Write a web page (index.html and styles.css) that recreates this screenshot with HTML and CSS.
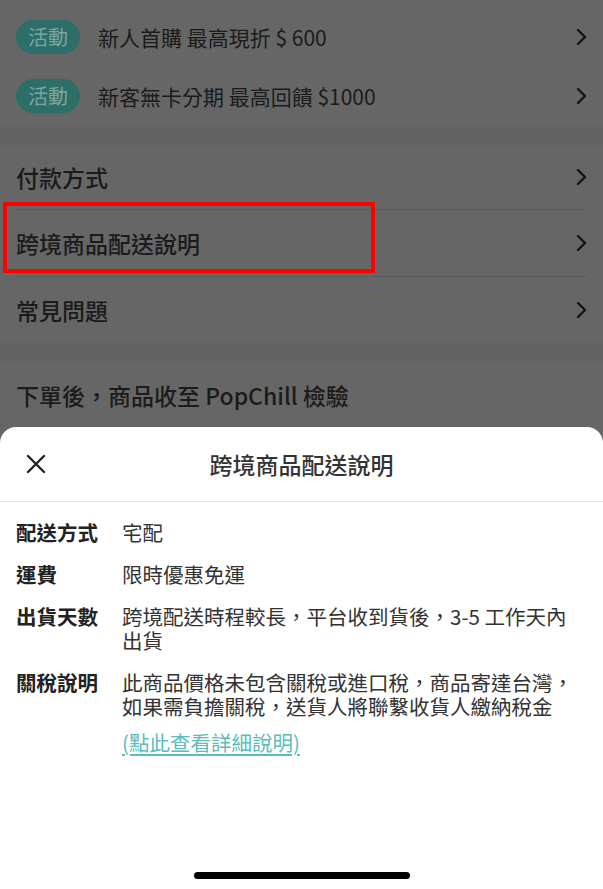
FILE: index.html
```html
<!DOCTYPE html>
<html lang="zh-TW">
  <head>
    <meta charset="UTF-8" />
    <meta name="viewport" content="width=device-width, initial-scale=1.0" />
    <title>跨境商品配送說明</title>
    <link rel="stylesheet" href="styles.css">
  </head>
  <body>
    <div class="page">
      <ul class="promo-list">
        <li class="promo-row">
          <span class="badge">活動</span>
          <span class="promo-text">新人首購 最高現折 $ 600</span>
          <svg class="chevron" viewBox="0 0 12 18"><path d="M3 2 L10 9 L3 16" /></svg>
        </li>
        <li class="promo-row">
          <span class="badge">活動</span>
          <span class="promo-text">新客無卡分期 最高回饋 $1000</span>
          <svg class="chevron" viewBox="0 0 12 18"><path d="M3 2 L10 9 L3 16" /></svg>
        </li>
      </ul>

      <div class="section-gap"></div>

      <ul class="menu">
        <li class="menu-row">
          <span>付款方式</span>
          <svg class="chevron" viewBox="0 0 12 18"><path d="M3 2 L10 9 L3 16" /></svg>
        </li>
        <li class="menu-row">
          <span>跨境商品配送說明</span>
          <svg class="chevron" viewBox="0 0 12 18"><path d="M3 2 L10 9 L3 16" /></svg>
          <span class="mark"></span>
        </li>
        <li class="menu-row">
          <span>常見問題</span>
          <svg class="chevron" viewBox="0 0 12 18"><path d="M3 2 L10 9 L3 16" /></svg>
        </li>
      </ul>

      <div class="section-gap"></div>

      <h2 class="inspect-title">下單後，商品收至 PopChill 檢驗</h2>
    </div>

    <div class="sheet">
      <div class="sheet-header">
        <button class="close-btn" aria-label="關閉">
          <svg viewBox="0 0 20 20"><path d="M2 2 L18 18 M18 2 L2 18" /></svg>
        </button>
        <h1>跨境商品配送說明</h1>
      </div>

      <dl class="info">
        <div class="info-row">
          <dt>配送方式</dt>
          <dd>宅配</dd>
        </div>
        <div class="info-row">
          <dt>運費</dt>
          <dd>限時優惠免運</dd>
        </div>
        <div class="info-row">
          <dt>出貨天數</dt>
          <dd>跨境配送時程較長，平台收到貨後，3-5 工作天內出貨</dd>
        </div>
        <div class="info-row">
          <dt>關稅說明</dt>
          <dd>
            此商品價格未包含關稅或進口稅，商品寄達台灣，如果需負擔關稅，送貨人將聯繫收貨人繳納稅金
            <a class="detail-link" href="#">(點此查看詳細說明)</a>
          </dd>
        </div>
      </dl>

      <div class="home-indicator"></div>
    </div>
  </body>
</html>
```

FILE: styles.css
```css
* {
  box-sizing: border-box;
}
html,
body {
  margin: 0;
  padding: 0;
  height: 100%;
}
body {
  font-family: 'Noto Sans CJK TC', 'Noto Sans', sans-serif;
  background-color: #666;
  color: #1b1b1b;
  position: relative;
  overflow: hidden;
}
ul {
  list-style: none;
  margin: 0;
  padding: 0;
}
.chevron {
  width: 12px;
  height: 18px;
  margin-left: auto;
  flex-shrink: 0;
}
.chevron path {
  fill: none;
  stroke: #141414;
  stroke-width: 2.4;
  stroke-linecap: round;
  stroke-linejoin: round;
}
.promo-list {
  padding-top: 7px;
  padding-bottom: 2px;
}
.promo-row {
  display: flex;
  align-items: center;
  height: 59px;
  padding: 0 16px;
}
.badge {
  display: inline-flex;
  align-items: center;
  justify-content: center;
  width: 64px;
  height: 34px;
  border-radius: 17px;
  background-color: #2d6e68;
  color: #7ea5a1;
  font-size: 20px;
  margin-right: 18px;
}
.promo-text {
  font-size: 21px;
}
.section-gap {
  height: 18px;
  background-color: #626262;
}
.menu-row {
  position: relative;
  display: flex;
  align-items: center;
  height: 64px;
  margin: 0 16px;
  font-size: 23px;
  font-weight: 500;
}
.menu-row + .menu-row {
  border-top: 1px solid #5b5b5b;
  height: 67px;
}
.mark {
  position: absolute;
  left: -13px;
  top: -8px;
  width: 372px;
  height: 71px;
  border: 4px solid #ff0000;
}
.inspect-title {
  margin: 0;
  padding: 17px 16px 0;
  font-size: 23px;
  font-weight: 500;
  line-height: 34px;
}
.sheet {
  position: absolute;
  top: 427px;
  left: 0;
  right: 0;
  bottom: 0;
  display: flex;
  flex-direction: column;
  background-color: #fff;
  border-radius: 16px 16px 0 0;
}
.sheet-header {
  display: grid;
  grid-template-columns: 72px 1fr 72px;
  align-items: center;
  height: 75px;
  border-bottom: 1px solid #e4e4e4;
}
.sheet-header h1 {
  margin: 0;
  text-align: center;
  font-size: 23px;
  font-weight: 500;
  color: #333;
}
.close-btn {
  border: none;
  background: none;
  padding: 0;
  margin-left: 26px;
  width: 20px;
  height: 20px;
}
.close-btn svg {
  display: block;
  width: 20px;
  height: 20px;
}
.close-btn path {
  fill: none;
  stroke: #222;
  stroke-width: 2.4;
  stroke-linecap: round;
}
.info {
  margin: 0;
  padding: 18px 25px 0 16px;
  display: flex;
  flex-direction: column;
  gap: 18px;
}
.info-row {
  display: grid;
  grid-template-columns: 106px 1fr;
  font-size: 20.5px;
  line-height: 24px;
}
.info-row dt {
  font-weight: 700;
  color: #222;
}
.info-row dd {
  margin: 0;
  color: #333;
}
.detail-link {
  display: block;
  margin-top: 12px;
  color: #5cbcbc;
  text-decoration: underline;
  text-underline-offset: 3px;
}
.home-indicator {
  width: 216px;
  height: 7px;
  border-radius: 4px;
  background-color: #000;
  margin: auto auto 10px;
}
```
